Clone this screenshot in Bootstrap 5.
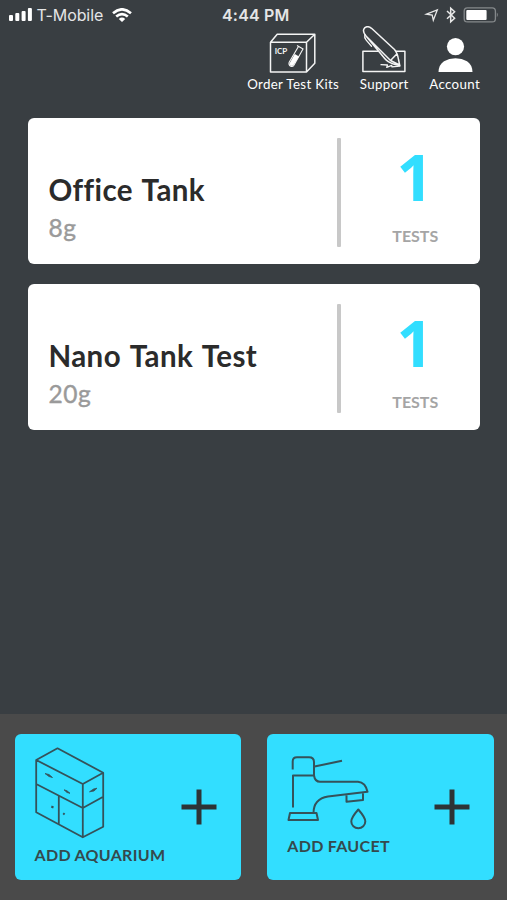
<!DOCTYPE html>
<html lang="en">
<head>
<meta charset="utf-8">
<meta name="viewport" content="width=device-width, initial-scale=1">
<title>My Tanks</title>
<link href="https://cdn.jsdelivr.net/npm/bootstrap@5.3.0/dist/css/bootstrap.min.css" rel="stylesheet">
<style>
body{background:#393e42;font-family:Lato,"Liberation Sans",sans-serif;width:507px;height:900px;overflow:hidden}
svg{display:block;flex:none}
.status{height:26px;padding:4px 9px 0 9px;font-family:Inter,"Liberation Sans",sans-serif;font-size:16px;line-height:22px;color:#e4e5e6}
.carrier{letter-spacing:-.1px;margin-left:4.5px;margin-right:8.5px}
.clock{font-weight:600;letter-spacing:.2px;left:222px;top:4px}
.tools{height:92px;padding:0 27px 0 0;gap:20.5px}
.tool{color:#fff;font-size:13.3px;line-height:16px;letter-spacing:.35px;text-decoration:none;white-space:nowrap}
.tool:hover{color:#fff}
.tool svg{margin-bottom:3px}
.tanks{padding:0 27px 0 28px;gap:20px}
.tank{height:146px;border:0;border-radius:6px;padding:20px 0 17.5px 20.5px}
.tank h2{font-size:29.5px;line-height:36px;font-weight:700;letter-spacing:.4px;word-spacing:2px;font-variant-ligatures:none;color:#2b2b2b;margin:34px 0 0;white-space:nowrap}
.volume{font-size:24.5px;line-height:30px;letter-spacing:.6px;color:#9a9a9a;margin-top:5px;-webkit-text-stroke:.4px #9a9a9a}
.rule{width:4px;background:#c8c8c8;border-radius:1px}
.tests{width:139.5px;padding-left:9px}
.count{font:700 64px/78px "Open Sans",sans-serif;color:#32deff}
.unit{font-size:16px;line-height:20px;font-weight:700;color:#a5a5a5;margin-top:10px;padding-left:1px}
.actions{height:186px;background:#4a4a4a;padding:20px 13.5px 0 14.5px;gap:26.5px}
.action{flex:1 1 0;height:146px;border:0;border-radius:6px;background:#32deff;padding:0 24px 3px 20px;color:#35494d}
.action:hover{background:#32deff}
.action .plus{margin-top:3px}
.label{gap:6px}
.caption{font-size:16px;line-height:20px;font-weight:700;letter-spacing:.3px;white-space:nowrap;width:0}
.faucet .label{gap:5px}
</style>
<script src="https://cdn.jsdelivr.net/npm/bootstrap@5.3.0/dist/js/bootstrap.bundle.min.js"></script>
</head>
<body class="d-flex flex-column">
<div class="status d-flex align-items-center position-relative">
  <svg width="23" height="14" viewBox="0 0 23 14" fill="#fff"><rect y="7" width="4" height="6" rx="1"/><rect x="6.3" y="5" width="4" height="8" rx="1"/><rect x="12.6" y="3" width="4" height="10" rx="1"/><rect x="18.9" y="0" width="4" height="13" rx="1"/></svg>
  <span class="carrier">T-Mobile</span>
  <svg width="20" height="15" viewBox="0 0 20 15" fill="none" stroke="#fff" stroke-width="2.6"><path d="M1 5.2Q10-2.6 19 5.2M4.2 8.6Q10 3.6 15.8 8.6"/><path d="M6.8 10.9Q10 8.3 13.2 10.9L10 14Z" fill="#fff" stroke="none"/></svg>
  <span class="clock position-absolute">4:44 PM</span>
  <svg class="ms-auto" width="74" height="18" viewBox="424 6 74 18" fill="none" stroke="#e8e8e8"><path d="M426.5 14.2 437.3 10 433.3 20.2 432.2 15.1Z" stroke-width="1.3"/><path d="m447 11 7.6 7.2-3.9 3.6V8.3l3.9 3.5-7.6 7" stroke-width="1.5"/><rect x="464.2" y="7.9" width="31.2" height="14" rx="3.2" stroke="#85898b" stroke-width="1.3"/><rect x="466.3" y="10" width="20.3" height="10" rx="1" fill="#fff" stroke="none"/><path d="M496.8 12.6q2 2.2 0 4.6z" fill="#85898b" stroke="none"/></svg>
</div>
<nav class="tools d-flex justify-content-end align-items-start">
  <a class="tool d-flex flex-column align-items-center" href="#">
    <svg width="50" height="47" viewBox="266.5 26 50 47" fill="none" stroke="#f4f4f4" stroke-width="1.5" stroke-linejoin="round"><path d="M269 42.3H305V72H269ZM269 42.3 275.7 34.3H313.3L305 42.3M313.3 34.3V63.3L305 72"/><text x="273.2" y="53.8" font-family="Lato" font-weight="700" font-size="8" letter-spacing="0" fill="#f4f4f4" stroke="none">ICP</text><path d="M295.5 45.5 302 49.2M296.8 46.7 287.7 62.2Q286.8 65 289.2 66.3 291.3 67 292.4 65.2L301.5 49" stroke-width="1.1"/><path d="M293.3 54 297.5 56.4 291.9 65.2Q290.6 66.6 289 65.5 287.7 64.5 288.5 62.4Z" fill="#fff" stroke="none"/></svg>
    <span>Order Test Kits</span></a>
  <a class="tool d-flex flex-column align-items-center" href="#">
    <svg width="46" height="47" viewBox="361 26 46 47" fill="none" stroke="#f4f4f4" stroke-width="1.5" stroke-linejoin="round" stroke-linecap="round"><path d="M378 51.2H362.9V71.5H404.9V51.2H396"/><path d="M390.5 60.5 366 36Q361.8 31 364.6 27.9 367.6 25.3 371.5 28.3L394.5 49.5Q397.5 53 398.6 60L399.8 65.6 393.5 64Q387.5 62 384.7 58.5L366 36M396.8 54 390.5 60.5 399.5 65"/><path d="M364.8 34.4Q364 37.6 366.2 40.2L371.5 46.3M381 64.7 387.5 65 386.7 67.4 391.7 65.4 392 66.8 399.8 66" stroke-width="1.3"/></svg>
    <span>Support</span></a>
  <a class="tool d-flex flex-column align-items-center" href="#">
    <svg width="36" height="47" viewBox="436.5 26 36 47" fill="#fff"><ellipse cx="455" cy="46.6" rx="8.6" ry="8.7"/><path d="M438 72Q438.3 64.5 443.5 61.2 448.5 58.3 455 58.3 461.5 58.3 466.5 61.2 471.7 64.5 472 72Z"/></svg>
    <span>Account</span></a>
</nav>
<main class="tanks d-flex flex-column flex-grow-1">
  <div class="card tank flex-row">
    <div class="flex-grow-1"><h2>Office Tank</h2><div class="volume">8g</div></div>
    <div class="rule"></div>
    <div class="tests text-center"><div class="count">1</div><div class="unit">TESTS</div></div>
  </div>
  <div class="card tank flex-row">
    <div class="flex-grow-1"><h2>Nano Tank Test</h2><div class="volume">20g</div></div>
    <div class="rule"></div>
    <div class="tests text-center"><div class="count">1</div><div class="unit">TESTS</div></div>
  </div>
</main>
<footer class="actions d-flex">
  <button class="btn action d-flex align-items-center justify-content-between">
    <span class="label d-flex flex-column"><svg width="71" height="93" viewBox="34.5 746 71 93" fill="none" stroke="#35525a" stroke-width="1.8" stroke-linejoin="round"><path d="M35.7 760 57 748.3 102.7 772.7V826.7L82.3 837.3 35.7 812.3ZM35.7 760 82.3 784V837.3M82.3 784 102.7 772.7M35.7 784 82.3 808 102.7 796.7M58.3 796V824.5"/><path d="M44.5 773.5 48.5 776.5 52 777.5 48.5 774.5ZM63.5 789.8 66.5 792.5 69.5 793.3 66.5 790.8ZM89 791.8 93 789 96.5 788.2 93.5 791Z" fill="#35525a" stroke-width=".8"/><path d="M50.8 806.5l2.2 1M62.7 813.2l1.4 1.2" stroke-width="2"/></svg>
    <span class="caption">ADD AQUARIUM</span></span>
    <svg class="plus" width="36" height="36" viewBox="0 0 36 36" stroke="#2d3436" stroke-width="5"><path d="M.5 18H35.5M18 .5V35.5"/></svg>
  </button>
  <button class="btn action faucet d-flex align-items-center justify-content-between">
    <span class="label d-flex flex-column"><svg width="84" height="76" viewBox="287 755.500 84 76" fill="none" stroke="#35525a" stroke-width="2" stroke-linejoin="round"><path d="M292.7 770V762Q292.7 757.7 297 757.7H309Q314 757.7 314 762.5V776Q315 782.3 320 782.3H358Q365.5 783 367.5 792.3L328 797Q313.5 799.5 313.5 813.5M293 808V776H314M314.5 767 342 761.3M290 813.5H316.5L318 820.5H288.5ZM346.5 796V802.2L363 800.5V794"/><path d="M358.3 810Q351.3 818 351.3 822A7 6.7 0 0 0 365.3 822Q365.3 818 358.3 810Z"/></svg>
    <span class="caption">ADD FAUCET</span></span>
    <svg class="plus" width="36" height="36" viewBox="0 0 36 36" stroke="#2d3436" stroke-width="5"><path d="M.5 18H35.5M18 .5V35.5"/></svg>
  </button>
</footer>
</body>
</html>
